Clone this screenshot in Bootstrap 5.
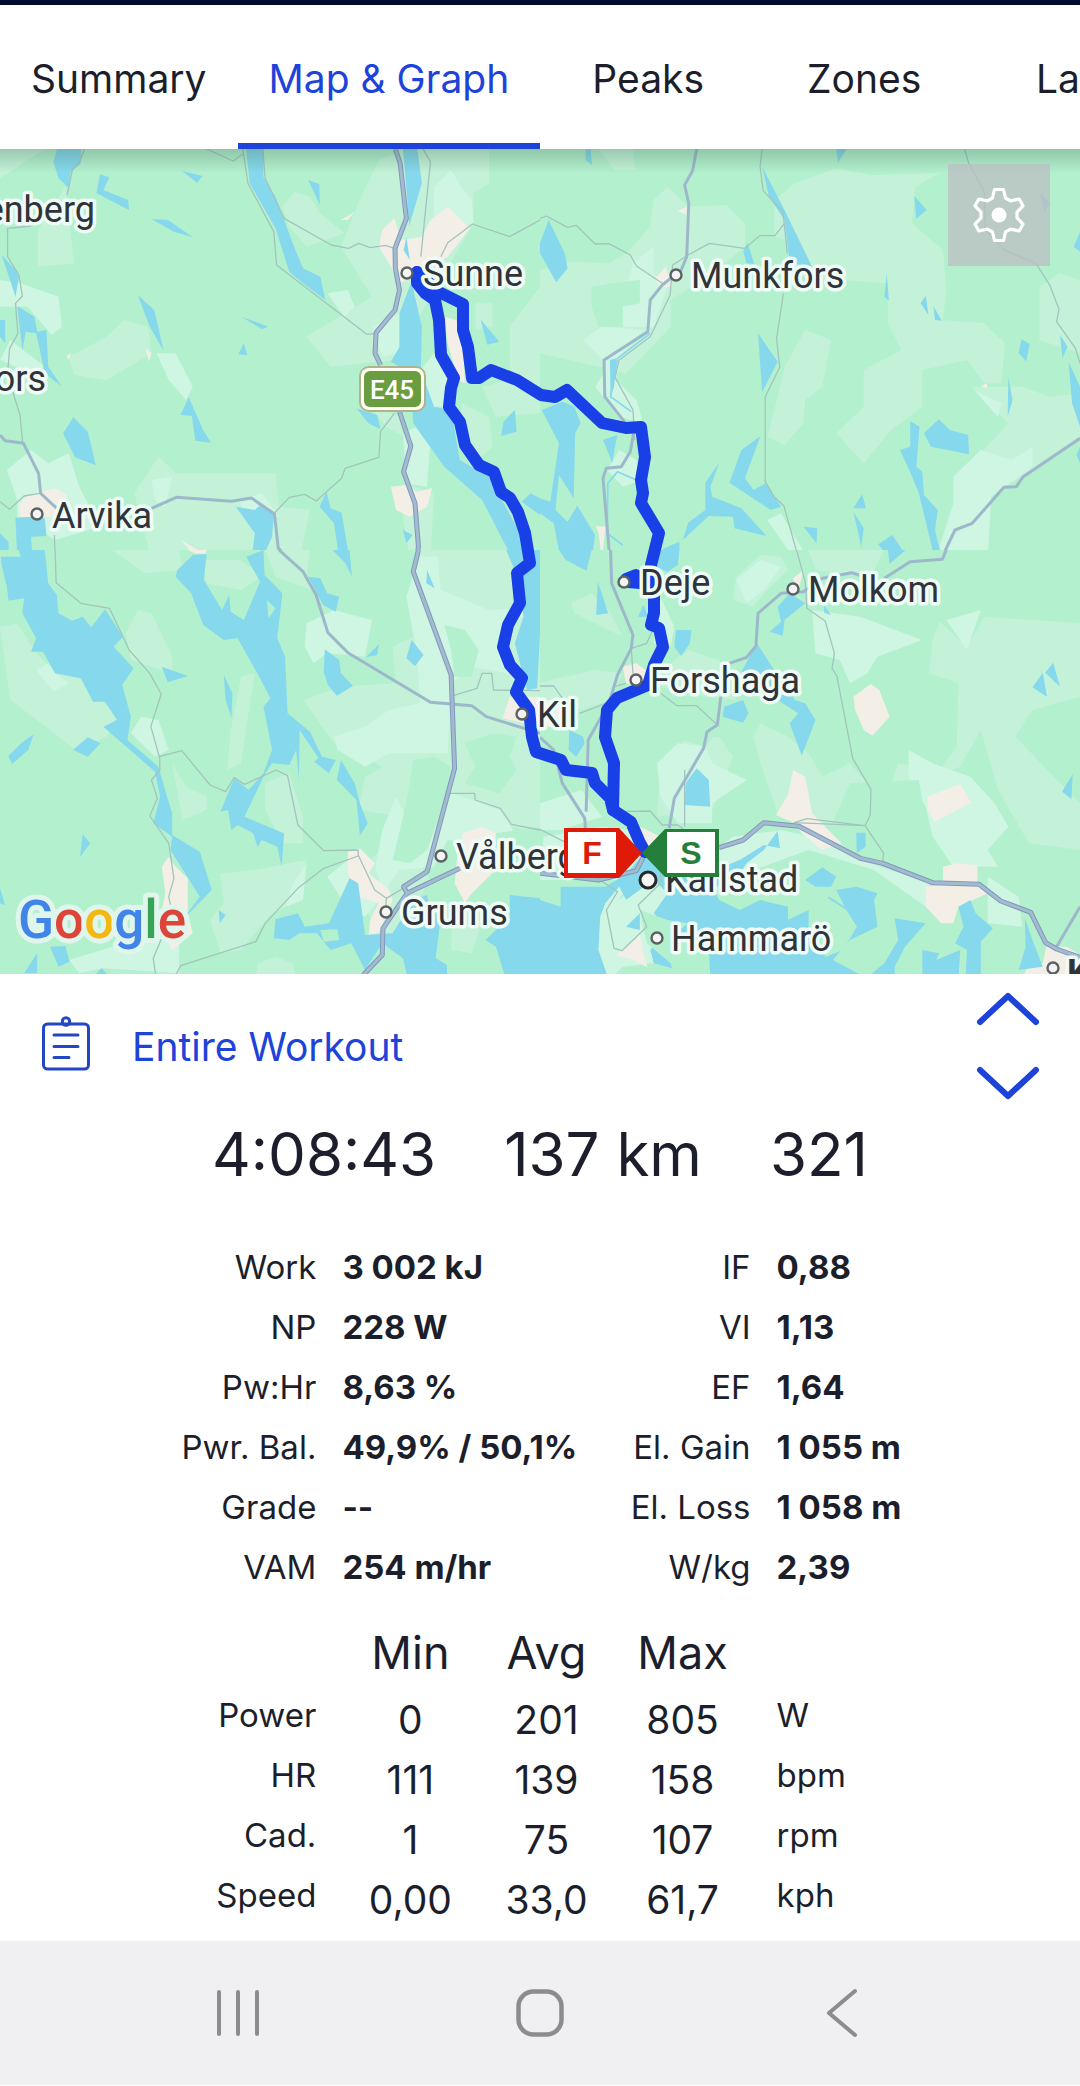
<!DOCTYPE html>
<html lang="en">
  <head>
    <meta charset="UTF-8" />
    <meta name="viewport" content="width=device-width, initial-scale=1.0" />
    <title>Workout - Map &amp; Graph</title>
    <!-- Bootstrap CSS -->
    <link
      href="https://cdn.jsdelivr.net/npm/bootstrap@5.3.0/dist/css/bootstrap.min.css"
      rel="stylesheet"
    />
    <style>
      body {
        font-family: Inter, "Liberation Sans", sans-serif;
        color: #1c1f2b;
        background-color: #fff;
      }
      .tab-strip {
        height: 149px;
        border-top: 5px solid #000c2e;
        overflow: hidden;
      }
      .tab-strip .nav-link {
        display: flex;
        align-items: center;
        justify-content: center;
        flex-shrink: 0;
        min-width: 216px;
        padding: 10px 31px 0;
        font-size: 39px;
        line-height: 48px;
        color: #1c1f2b;
        border-bottom: 6px solid transparent;
      }
      .tab-strip .nav-link.active {
        color: #1d43d8;
        border-bottom-color: #1d43d8;
      }
      .map-area svg {
        display: block;
      }
      .map-canvas {
        width: 100%;
        height: auto;
      }
      .map-settings {
        top: 15px;
        right: 30px;
        width: 102px;
        height: 102px;
        background-color: rgba(188, 190, 194, 0.75);
      }
      .land { fill: #b3f0ce; }
      .field { fill: #c3f2d9; }
      .meadow { fill: #cff5e3; }
      .town { fill: #f3efe6; }
      .water { fill: #86d8ec; }
      .lane, .road, .highway, .highway-core {
        fill: none;
        vector-effect: non-scaling-stroke;
        stroke-linejoin: round;
      }
      .lane { stroke: #a3c4bd; stroke-width: 1.3; }
      .road { stroke: #9db8ca; stroke-width: 3; }
      .highway { stroke: #8198bd; stroke-width: 5; }
      .highway-core { stroke: #a3bbcf; stroke-width: 3; }
      .route {
        fill: none;
        stroke: #193fe6;
        stroke-width: 12;
        stroke-linejoin: round;
        stroke-linecap: round;
      }
      .place {
        font: 36px Roboto, sans-serif;
        fill: #303338;
        stroke: #effbf6;
        stroke-width: 7;
        stroke-linejoin: round;
        paint-order: stroke;
      }
      .place-dot { fill: #f4f4f4; stroke: #5d6164; stroke-width: 2.4; }
      .workout-bar {
        height: 142px;
        padding: 0 40px;
      }
      .workout-link {
        gap: 40px;
        font-size: 39px;
        line-height: 48px;
        color: #1d43d8;
      }
      .workout-link span {
        padding-top: 4px;
      }
      .step-btn {
        line-height: 0;
      }
      .totals {
        gap: 68px;
        padding-bottom: 45px;
        font-size: 60px;
        line-height: 76px;
      }
      .metrics,
      .ranges {
        width: 100%;
        table-layout: fixed;
        font-size: 33px;
      }
      .metrics th,
      .metrics td,
      .ranges th,
      .ranges td {
        height: 60px;
        padding: 0;
        line-height: 40px;
        font-weight: 400;
        white-space: nowrap;
      }
      .metrics th {
        padding-right: 13px;
        text-align: right;
      }
      .metrics td {
        padding-left: 13px;
        font-weight: 700;
      }
      .ranges {
        margin-top: 16px;
      }
      .ranges thead th {
        height: 72px;
        padding-top: 8px;
        font-size: 45px;
        line-height: 56px;
      }
      .ranges tbody th {
        padding-right: 26px;
        text-align: right;
      }
      .ranges tbody td {
        padding-top: 9px;
        font-size: 39px;
        text-align: center;
      }
      .ranges tbody td.unit {
        padding-top: 0;
        padding-left: 26px;
        font-size: 33px;
        text-align: left;
      }
      .system-bar {
        height: 144px;
        margin-top: 16px;
        padding: 0 8%;
        background-color: #f0f0f2;
      }
      .system-bar .btn {
        flex: 1;
      }
    </style>
  </head>
  <body>
    <nav class="nav flex-nowrap tab-strip" aria-label="Workout sections">
      <a class="nav-link" href="#">Summary</a>
      <a class="nav-link active" href="#" aria-current="page">Map &amp; Graph</a>
      <a class="nav-link" href="#">Peaks</a>
      <a class="nav-link" href="#">Zones</a>
      <a class="nav-link" href="#">Laps</a>
    </nav>

    <main>
      <!-- Map -->
      <div class="map-area position-relative">
        <svg class="map-canvas" viewBox="0 149 1080 825" role="img" aria-label="Route map">
          <defs>
            <linearGradient id="topShade" x1="0" y1="0" x2="0" y2="1">
              <stop offset="0" stop-color="#3c6650" stop-opacity="0.3" />
              <stop offset="1" stop-color="#3c6650" stop-opacity="0" />
            </linearGradient>
          </defs>

          <!-- North-west tile -->
          <svg x="0" y="140" width="540" height="420" viewBox="0 0 1568 1260" preserveAspectRatio="none">
            <rect class="land" width="1568" height="1260" />
            <path class="field" d="M0 27H130L0 115zM110 270L190 140L215 370L110 380zM200 650L310 590L360 540L430 560L440 640L310 720L215 705zM820 200L855 155L900 170L930 220L1000 280L890 320L840 260zM1040 190L1100 60L1180 27H1420V130L1375 160V250L1200 560L1150 660L960 680L890 590L970 540L1080 470L990 320zM1480 560L1568 440V820L1440 830L1400 740L1480 720zM1380 490H1430V560L1380 570zM1340 790L1420 830L1430 920L1390 960L1340 900zM390 1060L460 950L510 1000L800 1000L810 1100L900 1110L870 1260H440zM1040 750L1090 800L1160 830L1200 1040L1260 1060L1250 1260H1190L1170 1130L1190 900L1120 860z" />
            <path class="meadow" d="M0 420L60 430L170 470L180 560L150 585L80 500H0zM1260 140L1310 90L1340 140L1370 180L1375 250L1260 300zM950 460L1010 450L1030 500L1000 530zM1080 560L1160 520L1160 640L1110 650zM455 640L510 640L560 740L540 780L490 720zM20 990L90 930L140 970L200 940L230 1040L290 1160L160 1200L50 1130V1080zM690 1080L760 1060L810 1130L740 1160zM440 1020L500 1010L480 1100L450 1080zM1170 880L1210 860L1250 900L1240 1040L1180 1030zM0 660L30 600L130 680L90 700zM1222 690L1260 640L1320 690L1300 800L1260 800z" />
            <path class="town" d="M1110 270L1145 235L1165 300L1225 290L1250 240L1300 200L1365 265L1300 350L1225 400L1160 430L1135 380L1100 320zM1290 530L1325 540L1345 620L1350 730L1330 720L1300 610zM55 1095L80 1065L160 1045L195 1065L160 1130H60zM1135 1040L1180 1035L1210 1055L1255 1045L1240 1100L1190 1130L1150 1110zM423 625L440 640L432 665zM525 1200L600 1245L560 1240zM990 240L1030 215L1010 240zM193 648L207 638L200 660z" />
            <path class="water" d="M165 27H235V70L205 95L200 145L170 115L155 65zM290 103L318 112L300 150L372 180L375 210L280 160zM528 92L588 108L572 128zM895 120L927 132L929 195zM441 238L488 240L560 292L505 275zM715 27H765V110L800 170L850 310L880 385L930 410L945 480L880 430L840 395L800 265L725 130zM1170 27H1212L1225 130L1188 258L1183 180zM1180 290L1190 360L1172 330zM1195 425L1225 560L1222 690L1260 800L1310 810L1335 960L1420 1010L1510 1180L1530 1260H1490L1400 1080L1290 980L1200 850L1190 700L1135 665L1160 620L1160 520zM5 345L45 390L55 410L45 470zM0 540H15V610L0 590zM50 498L100 530L108 575L135 570L140 680L180 740L130 700L105 580L75 575L65 630zM400 465L448 510L475 632L435 560zM700 530L780 560L760 567zM708 610L718 645L692 643zM548 772L590 870L613 908L567 902L557 828L524 825zM213 832L255 875L278 976L218 952L183 880zM1395 538L1450 605L1415 614zM1495 810L1500 875L1455 888L1462 845zM1035 805L1095 825L1105 868L1070 850zM45 1133L95 1130L130 1135L135 1188L90 1190L95 1260H50zM0 1180L25 1205V1260H0zM685 1100L740 1110L760 1090L795 1125L790 1190L760 1260H730L740 1180zM928 1100L948 1055L960 1105L992 1118L1015 1260H985L970 1150zM1170 1170L1198 1185L1180 1210zM1515 1085L1540 1060L1568 1075V1125zM540 1255L570 1235L605 1245V1260z" />
            <path class="lane" d="M245 27L230 70L210 90L195 165M22 265V350L55 405L65 468L45 490L52 580L28 625L22 700L40 765L58 825L66 910M22 265L90 258M600 27L677 63L708 40M705 27L720 130L795 275L803 375L1065 583L1095 580M763 27L770 115L825 235L962 315L1012 325L1042 310L1075 323L1120 316L1145 325M1228 27L1250 65L1222 350M1568 240L1480 290L1372 252L1300 308L1280 350M1145 820L1105 875L1100 952L1002 985L992 1015L918 1083L885 1063L840 1072L798 1118M0 1085L28 1108L70 1068L115 1060M158 1185L160 1260" />
            <path class="road" d="M0 885L15 902L68 910L112 1000L118 1060L165 1105M440 1105L512 1072L672 1084L730 1074L797 1122L808 1225L850 1260" />
            <path class="highway" d="M1148 27L1162 70L1180 235L1147 325L1148 385L1160 450L1147 510L1092 578L1089 640L1105 675M1160 815L1193 918L1172 995L1205 1090L1215 1220L1210 1260" />
            <path class="highway-core" d="M1148 27L1162 70L1180 235L1147 325L1148 385L1160 450L1147 510L1092 578L1089 640L1105 675M1160 815L1193 918L1172 995L1205 1090L1215 1220L1210 1260" />
          </svg>

          <!-- North-east tile -->
          <svg x="540" y="140" width="540" height="420" viewBox="0 0 1568 1260" preserveAspectRatio="none">
            <rect class="land" width="1568" height="1260" />
            <path class="field" d="M170 27H270L277 90L215 90zM0 390L80 365L200 370L250 340L320 260L330 180L370 140L430 200L540 195L595 250V320L500 400L380 480V560L250 700L0 640zM680 180L740 130L860 85L960 105L1160 100L1090 140L1080 250L1170 330L1180 450L1170 540L1290 550L1350 610L1340 730L1290 730L1240 660L1110 690L1110 800L1020 870L940 970L860 880L940 800V690L1050 630L1010 550V430L740 410L720 300L680 290zM770 570L845 600L820 740L770 780L765 850L710 915L660 890L690 770L710 680zM1450 440L1510 400L1568 420V640L1450 600zM1255 740L1400 740L1480 770L1568 760V900L1400 1010L1350 1040L1280 940L1360 850z" />
            <path class="meadow" d="M125 600L180 560L300 570L240 640L220 720L280 780L300 850L230 830L160 740L185 700V660zM195 990L230 930L280 960L300 1020L240 1040zM270 370L330 320V400L370 440L330 560L240 560V490zM1200 1010L1280 930L1370 960L1430 920V980L1310 1070L1300 1260H1170L1160 1220L1200 1090zM660 1140L700 1120L740 1190L780 1260H740zM620 1260L660 1240L680 1260zM1260 750L1340 790L1330 830z" />
            <path class="land" d="M150 440L210 430L290 420L290 490L240 500V560H170L150 500z" />
            <path class="town" d="M335 415L365 380L385 440L345 440zM400 212L427 200L425 225zM1280 738L1298 730V745zM162 1158L190 1160L180 1260L170 1180zM370 143L382 153z" />
            <path class="water" d="M133 27H147L151 75L132 60zM860 27H890L865 68zM25 240L72 340L80 385L47 427L0 340V310zM645 80L710 210L790 380L725 370L710 240L665 170zM590 335L603 310L622 372L600 370zM1087 168L1123 210L1092 236zM1452 160L1480 190L1465 215zM1568 275L1550 320L1568 335zM1007 400L1013 482L1000 470zM1120 467L1128 525L1105 490zM1142 498L1167 542L1147 540zM633 580L690 665L645 757zM1398 598L1422 612L1412 664L1390 640zM1510 585L1532 620L1517 655zM1535 665L1568 740V860L1545 790zM1360 710L1372 780L1358 830zM5 810L65 785L100 800L118 850L102 880L98 1075L55 1005L45 1110L80 1145L108 1097L160 1185L150 1260H60L40 1150L0 1120V1075L30 1085L55 910zM183 900L224 885L210 968zM203 660L222 655L215 740L205 770zM640 888L595 1015L620 1050L655 1030L700 1100L670 1110L550 1028L585 930zM520 968L495 1040L500 1070L585 1105L658 1188L565 1165L560 1130L490 1128L415 1200L430 1148L480 1110V1028zM1075 843L1102 860L1093 980L1110 995L1115 1065L1155 1110L1147 1170L1162 1235L1140 1230L1100 1060L1070 985L1045 930L1075 920zM1158 838L1190 870L1243 885L1246 943L1135 920L1115 880zM1568 920L1558 945L1568 970zM935 1063L947 1105L910 1105zM910 1115L940 1165L933 1220zM765 1160L805 1165L803 1210zM1023 1185L1062 1245L1045 1260H1020L982 1213zM360 1225L405 1205V1260H340z" />
            <path class="lane" d="M0 235L18 228L80 262L105 256L160 312L200 311L262 345L280 378L355 430M645 27L639 80L648 152L705 215L710 260L718 340M710 250L682 287H638L595 325L492 310L430 345L385 375L378 465L320 590L230 660L218 712L270 810L275 900M707 460L687 595L696 682L654 770V1025L680 1070L708 1097L752 1260M1233 27L1245 70L1290 155L1293 270L1350 332L1440 370L1480 435L1507 508L1500 545L1555 625L1568 670" />
            <path d="M320 580L225 655L205 770L265 815M280 1020L225 995L197 1030L195 1180L240 1215" fill="none" stroke="#86d8ec" stroke-width="5" />
            <path class="road" d="M455 27L443 92L420 135L432 190L426 350L410 390L355 435L320 480L313 575L186 660L188 770L272 880L262 935L236 980L192 985L183 1015L203 1260M1568 895L1403 1010L1383 1040L1347 1042L1255 1150L1205 1170L1165 1257L1080 1260" />
          </svg>

          <!-- South-west tile -->
          <svg x="0" y="550" width="540" height="430" viewBox="0 0 1568 1290" preserveAspectRatio="none">
            <rect class="land" width="1568" height="1290" />
            <path class="field" d="M325 0H520L530 60L420 70zM0 230L50 220L100 300L160 370L230 385L290 445L340 500L310 560L220 600L120 520L30 450zM400 180L440 190L500 320V370L380 330L365 250zM590 30L700 30L760 80L700 120L600 100zM700 380L740 370L720 500L700 640L660 660L670 540zM770 0H900L890 80L930 130L800 80zM880 450L990 410L1150 400L1140 290L1200 260L1180 140L1220 0H1568V850L1490 830L1300 730L1230 720L1170 800L1040 780L1060 680L1110 650L970 580zM770 700L840 670L880 800L880 880L820 880L770 780zM500 640L540 710L600 740V780L530 810zM640 970L740 960L890 930L860 1050L780 1100L700 1200L640 1210L610 1110L650 1060zM1010 990L1160 850L1250 990L1130 1180L1090 1130zM1310 1140L1400 1110L1370 1210L1310 1200zM750 1240L800 1220L850 1240L860 1290H740z" />
            <path class="meadow" d="M890 220L970 180L1080 210L1060 320L950 310L910 340L885 290zM1180 140L1220 20L1270 20L1280 120L1420 180L1568 170L1470 230L1450 290L1520 380L1370 350L1310 400L1300 610L1130 610L1060 650L980 600L970 560L1060 530L1130 480L1220 460L1210 300zM105 360L140 340L160 370L200 400L155 425zM410 500L460 510L490 600L450 620L380 550zM1290 720L1370 750L1450 780L1490 840L1460 900L1300 870L1260 950L1160 960L1130 1000L1120 1050L1090 950L1110 840L1150 740L1180 800zM950 980L1010 930L1070 1000L1100 1050L1060 1100L1000 1060zM850 1000L890 940L880 1050L830 1070zM200 1230L360 1180L430 1110L520 1180V1270L300 1255L230 1270z" />
            <path class="land" d="M1290 225L1350 240L1390 300L1370 380L1320 380L1310 300zM1350 580L1430 550L1500 560L1480 620L1500 660L1450 730L1350 700L1380 650zM1200 630L1260 620L1310 650L1290 760L1240 900L1190 940L1140 930L1180 760zM1440 850L1568 830V960L1500 990L1440 930z" />
            <path class="town" d="M545 0H600L597 12L565 10zM1480 440L1568 440V530L1460 505zM470 950L490 920L510 950L545 985V1090L560 1150L500 1200L460 1130L480 1030zM1010 905L1045 895L1088 940L1070 970L1130 1020L1140 1050L1100 1150L1070 1155L1075 1110L1100 1060L1040 1040L1010 970zM1345 850L1400 830L1440 850L1430 900L1440 960L1370 1030L1350 1060L1320 1000L1330 900zM705 1140L680 1185L700 1150z" />
            <path class="water" d="M0 0H130L140 100L165 135L170 190L210 212L240 200L265 232L305 178L357 260L330 290L388 355L355 405L380 500L370 570L460 650L485 740L500 790V855L580 905L615 1020L530 1110L580 1040L495 900L500 860L445 820L465 740L450 665L300 530L340 510L305 455L270 455L235 385L160 370L125 305L90 305L105 265L65 190L70 145L25 152L20 110L5 45zM515 60L560 15L600 12L592 90L645 180L665 135L670 185L708 210L755 95L715 20L765 0L768 75L820 130L805 265L828 320L835 490L900 545L935 620L975 630L955 670L912 635L925 625L870 540L868 690L860 600L840 645L790 640L770 670L710 800L825 850L818 950L805 890L760 870L748 890L735 850L690 825L672 840L662 780L640 785L680 685L722 720L765 670L790 600L765 470L785 445L750 375L690 265L650 270L590 225L555 130L510 80zM895 80L930 85L950 130L985 140L975 185L938 165zM965 0H1015L1022 80L1003 40zM1240 60L1262 115L1238 100zM1195 270L1230 315L1205 348L1180 325zM943 298L985 330L990 370L1025 408L978 437L952 405L940 365zM1100 283L1095 315L1062 322zM470 350L545 378L487 397zM650 375L675 430L672 503L655 450zM98 552L82 600L35 642L24 618L62 580zM255 562L292 580L255 620L212 600zM240 853L262 880L232 922zM978 690L990 630L1030 700L1045 760L1068 820L1045 857L1035 750zM1470 0H1568V250L1560 415L1530 420L1495 280L1520 200L1510 100zM0 1015L15 1065L0 1060zM145 1190L190 1188L202 1235L170 1250zM108 1210V1270H70zM270 1280L295 1255L320 1280zM635 1080L655 1095L638 1120zM800 1108L865 1090L885 1130L955 1120L1015 985L1040 1000L1060 1155L1140 1150L1200 1050L1240 1035L1250 1080L1280 1100L1265 1225L1298 1245V1290H1185L1170 1225L1110 1180L1060 1260L1020 1180L960 1200L920 1150L870 1150L840 1170L795 1165zM1480 1035L1568 1045V1290H1470L1440 1190L1410 1170L1480 1100z" />
            <path class="land" d="M0 0H55L60 20H0zM775 150L800 175L780 205zM930 1140L980 1138L985 1170L940 1175z" />
            <path class="lane" d="M160 0L163 98L235 160L318 175L375 300L435 370L468 432L438 530L464 625V660L440 690L457 745L435 798L490 880L505 985L490 1040L500 1090L445 1225L452 1275M462 620L528 602L610 705L655 725L680 683L710 703L802 660L835 677L865 825L940 902L1040 900V915L1088 1020L1122 1045L1170 1015M1040 918L940 955L865 1015L770 1120L743 1175L525 1247L510 1275M1315 437L1385 415L1400 370H1428L1433 420L1568 422M1300 730H1378L1380 750L1453 775L1485 823L1568 840M1122 1045L1120 1075" />
            <path class="road" d="M810 0L880 65L918 135L952 248L1010 308L1250 457L1370 467L1412 500L1568 550" />
            <path class="highway" d="M1215 0L1200 65L1310 375L1320 655L1240 965L1172 1010L1182 1030L1112 1135L1110 1215L1055 1275M1182 1030L1335 955" />
            <path class="highway-core" d="M1215 0L1200 65L1310 375L1320 655L1240 965L1172 1010L1182 1030L1112 1135L1110 1215L1055 1275M1182 1030L1335 955" />
          </svg>

          <!-- South-east tile -->
          <svg x="540" y="550" width="540" height="430" viewBox="0 0 1568 1290" preserveAspectRatio="none">
            <rect class="land" width="1568" height="1290" />
            <path class="field" d="M560 150L570 80L640 15L700 20L720 60L650 130L620 170zM90 160L150 130L200 180L240 260L100 190zM30 390L160 360L240 370L200 450L120 480L0 440V400zM380 340L430 300L520 330L570 450L480 440L350 410zM620 560L640 520L720 560L780 610L820 680L900 640L1000 760L1040 640L1160 660L1210 590L1215 400L1130 370L1140 270L1160 215L1240 290L1290 200L1568 220V440L1430 480L1380 560L1510 700L1568 760V900L1420 880L1330 720L1280 540L1220 650L1090 700L1000 830L740 810L690 790L640 640zM780 0H1000L960 80L800 60zM350 640L420 570L520 560L560 620L500 780L340 800z" />
            <path class="meadow" d="M570 90L640 30L700 50L650 120L600 160zM790 180L930 200L1110 270L980 320L950 370L900 400L870 330L800 310zM340 640L400 580L480 590L500 640L600 690L500 760L500 820L400 820L350 740zM0 760L120 720L180 800L60 840H0zM10 860L180 830L260 840L300 900L300 990H0zM1070 600L1140 640L1250 680L1320 760L1360 830L1300 900L1330 950L1200 950L1140 860L1120 770L1070 680zM1300 980L1390 1040L1400 1130L1300 1120zM350 140L390 230L380 290L330 280zM1180 210L1280 180L1240 300zM560 860L700 840L870 880L960 940L1130 1000L1120 1070L970 960L780 900L620 960L520 960V890z" />
            <path class="land" d="M900 700L1100 690L1130 880L1100 960L960 870L840 840zM420 480L520 540L480 590L380 560L240 600L230 500z" />
            <path class="town" d="M910 440L960 402L985 420L1015 500L965 557L940 540L915 480zM735 660L770 680L790 790L875 880L820 900L760 850L740 820L685 795L720 735zM1125 740L1220 702L1252 758L1145 815L1125 780zM1170 950L1210 940L1270 945L1270 1000L1300 1030L1215 1070L1200 1120L1165 1120L1120 1070V1010L1170 1000zM240 350L280 340L320 370L300 410L250 400zM735 85L765 60L750 125zM0 450H80L100 530H0zM290 830L370 870L310 900zM260 960L350 960L350 1000L280 1040L230 1010zM1470 1190L1530 1190L1568 1215V1275H1405L1415 1250L1460 1240z" />
            <path class="water" d="M55 0H150L135 62L75 30zM340 0H405L400 45L370 65L335 50zM1010 0H1062L1015 42zM168 95L198 190L163 195zM300 165L315 200H285zM395 240H440L435 280L410 318L390 290zM725 130L770 160L710 210L705 257L667 245L700 215L690 170zM825 165L845 195L825 188zM630 280L680 360L740 450L770 460L800 510L760 617L725 520L750 490L690 450L585 365zM535 470L590 450L605 490L590 518L530 500zM85 540L125 560L130 580L105 620L83 600zM1430 412L1460 368L1472 440zM1490 338L1510 410L1467 368zM1547 672L1543 747L1516 725zM455 655L490 690L494 770L420 765L423 700zM918 848H945L946 890L920 908zM690 843L697 895L650 885L580 930L520 955L480 980H400L360 940L310 900L260 960L230 985L190 1010L60 1010V1070L0 1050V1290H200L170 1200L175 1100L190 1060L230 1010L250 1050L330 990L370 1030L330 1090L370 1130L320 1200L330 1240L400 1260L500 1290H960L850 1230L900 1170L980 1130L970 1050L980 1030L920 1010L860 1020L885 1070L840 1040L780 1080L720 1110V1070L640 1050L580 1080L520 1050L500 1010L560 1000L600 940L650 900zM820 952L860 980L845 1010L800 1010L770 990zM1030 1105L1120 1120L1060 1190L1030 1250V1290H940L1000 1240L1040 1170zM1215 1070L1250 1050L1265 1090L1315 1135L1280 1175V1290H1235L1240 1200L1205 1180L1230 1130zM1110 1200L1160 1210L1150 1230L1220 1200L1215 1290H1110zM1408 1105L1430 1170L1460 1250L1390 1260L1410 1190z" />
            <path class="meadow" d="M190 1060L230 1010L250 1050L330 990L370 1030L330 1090L370 1130L320 1200L330 1240L240 1250L200 1290L170 1200L175 1100z" />
            <path class="land" d="M290 1080L370 1110L430 1120L380 1160L490 1195L495 1290H390L380 1240L310 1180L300 1130zM780 1070L830 1040L890 1080L920 1130L880 1200L830 1220L780 1160z" />
            <path class="water" d="M250 1130L290 1090V1140zM230 1050L275 1000L260 1005z" />
            <path class="town" d="M220 1215L290 1150L300 1210L312 1252L270 1230z" />
            <path class="lane" d="M745 0L770 95L775 175L828 213L855 310L848 355L862 378L908 625L961 718L959 795L944 827L738 818L775 806L944 827L998 910L995 935M325 245L310 280L265 295L270 370M215 410L250 400M115 490L205 455M0 408H40L65 445M350 430L398 467H455L515 525M420 660V830M230 785L320 783L355 825H400L420 840M0 838L70 875M130 960L225 1025L193 1080L215 1195L238 1202L310 1130L285 1065L350 1000L350 970" />
            <path class="road" d="M205 0L208 100L270 255L265 295L225 375L200 460L140 570L134 785M0 562L40 600L65 700L130 805L132 840M1180 0L1168 28L1075 35L1000 85M935 78L905 68L820 85L765 125L700 130L633 190L627 288L600 322L550 340M525 440L515 525L485 545L475 595L390 745L375 835M1568 1070L1500 1190" />
            <path class="highway" d="M0 970L170 990L280 962L310 900M520 893L590 870L650 818L752 829L930 925L995 940L1140 998L1275 1003L1338 1053L1425 1087L1468 1178L1500 1197L1568 1222" />
            <path class="highway-core" d="M0 970L170 990L280 962L310 900M520 893L590 870L650 818L752 829L930 925L995 940L1140 998L1275 1003L1338 1053L1425 1087L1468 1178L1500 1197L1568 1222" />
          </svg>

          <rect x="0" y="149" width="1080" height="24" fill="url(#topShade)" />

          <!-- Ridden route -->
          <path class="route" d="M417 272L417 283L425 293L435 300L439 320L441 355L454 378L451 388L449 407L460 422L465 445L479 465L494 472L501 492L510 498L518 512L525 533L530 563L517 573L520 603L508 625L503 647L510 665L522 678L516 692L529 710L532 737L536 752L561 760L566 770L592 773L595 783L610 798L613 810L631 822L640 843L645 852" />
          <path class="route" d="M417 272L439 292L463 304L463 330L468 347L472 378L479 378L491 370L517 380L541 395L555 397L567 390L602 423L626 428L641 427L645 457L641 480L643 493L641 503L659 533L651 565L654 597L654 613L651 625L659 628L663 647L654 665L648 685L617 698L607 710L605 737L614 763L613 810" />
          <path class="route" d="M626 579L636 575L640 583L628 582" />

          <!-- Road shield -->
          <rect x="359" y="366" width="67" height="46" rx="10" fill="#b0b48a" />
          <rect x="361" y="368" width="63" height="42" rx="8" fill="#fffef2" />
          <rect x="364" y="371" width="57" height="36" rx="6" fill="#699d40" />
          <text x="392" y="399" text-anchor="middle" font-family="Roboto, sans-serif" font-size="26" font-weight="500" fill="#fff">E45</text>

          <!-- Places -->
          <g class="place-dot">
            <circle cx="407" cy="273" r="5.5" />
            <circle cx="676" cy="275" r="5.5" />
            <circle cx="37" cy="514" r="5.5" />
            <circle cx="624" cy="582" r="5.5" />
            <circle cx="793" cy="589" r="5.5" />
            <circle cx="636" cy="680" r="5.5" />
            <circle cx="522" cy="714" r="5.5" />
            <circle cx="441" cy="856" r="5.5" />
            <circle cx="386" cy="912" r="5.5" />
            <circle cx="657" cy="938" r="5.5" />
            <circle cx="1053" cy="968" r="5.5" />
            <circle cx="648" cy="880" r="8" stroke="#26292b" stroke-width="3" />
          </g>
          <g class="place">
            <text x="95" y="222" text-anchor="end">enberg</text>
            <text x="46" y="391" text-anchor="end">ors</text>
            <text x="423" y="286">Sunne</text>
            <text x="691" y="288">Munkfors</text>
            <text x="52" y="528">Arvika</text>
            <text x="640" y="595">Deje</text>
            <text x="808" y="602">Molkom</text>
            <text x="650" y="693">Forshaga</text>
            <text x="537" y="727">Kil</text>
            <text x="456" y="869">Vålberg</text>
            <text x="401" y="925">Grums</text>
            <text x="665" y="892">Karlstad</text>
            <text x="671" y="951">Hammarö</text>
            <text x="1067" y="985" font-weight="700">K</text>
          </g>

          <!-- Start and finish flags -->
          <path d="M564 828H619L642 853L619 878H564z" fill="#e01a08" />
          <rect x="568" y="832" width="48" height="41" fill="#fff" />
          <text x="592" y="864" text-anchor="middle" font-family="Liberation Sans, sans-serif" font-size="32" font-weight="700" fill="#e01a08">F</text>
          <path d="M719 829H665L642 853L665 877H719z" fill="#257f3a" />
          <rect x="667" y="832" width="48" height="41" fill="#fff" />
          <text x="691" y="864" text-anchor="middle" font-family="Liberation Sans, sans-serif" font-size="32" font-weight="700" fill="#257f3a">S</text>

          <!-- Map provider -->
          <text x="18" y="938" font-family="Roboto, sans-serif" font-size="53" font-weight="500" stroke="#e0f6ec" stroke-width="10" stroke-linejoin="round" paint-order="stroke"><tspan fill="#4285e8">G</tspan><tspan fill="#dd4539">o</tspan><tspan fill="#f3b912">o</tspan><tspan fill="#4285e8">g</tspan><tspan fill="#37a354">l</tspan><tspan fill="#dd4539">e</tspan></text>
        </svg>

        <button type="button" class="btn rounded-0 border-0 p-0 position-absolute d-flex align-items-center justify-content-center map-settings" aria-label="Map settings">
          <svg width="60" height="60" viewBox="-30 -30 60 60" fill="none" stroke="#fff" stroke-width="3.2" stroke-linejoin="round">
            <path d="M-6.5 -17L-4.5 -25.500H4.5L6.5 -17L11.5 -14.1L20.2 -16L24 -9.2L18 -2.8V2.8L24 9.2L20.2 16L11.5 14.1L6.5 17L4.5 25.500H-4.5L-6.5 17L-11.5 14.1L-20.2 16L-24 9.2L-18 2.8V-2.8L-24 -9.2L-20.2 -16L-11.5 -14.1z" />
            <circle r="7.5" fill="#fff" stroke="none" />
          </svg>
        </button>
      </div>

      <!-- Selected range -->
      <div class="d-flex align-items-center justify-content-between workout-bar">
        <a href="#" class="d-flex align-items-center text-decoration-none workout-link">
          <svg width="52" height="58" viewBox="0 0 52 58" fill="none" stroke="#2347c4" stroke-width="3" stroke-linecap="round">
            <rect x="3.5" y="8" width="45" height="45" rx="4" />
            <circle cx="26" cy="5.5" r="3.700" />
            <path d="M14 19H38M14 30.500H38M14 41.500H29" />
          </svg>
          <span>Entire Workout</span>
        </a>
        <div class="d-flex flex-column step-group">
          <button type="button" class="btn p-0 border-0 step-btn" aria-label="Previous">
            <svg width="64" height="56" viewBox="0 0 64 56" fill="none" stroke="#1d43d8" stroke-width="6" stroke-linecap="round" stroke-linejoin="round"><path d="M4 33L32 7L60 33" /></svg>
          </button>
          <button type="button" class="btn p-0 border-0 step-btn" aria-label="Next">
            <svg width="64" height="56" viewBox="0 0 64 56" fill="none" stroke="#1d43d8" stroke-width="6" stroke-linecap="round" stroke-linejoin="round"><path d="M4 25L32 51L60 25" /></svg>
          </button>
        </div>
      </div>

      <div class="d-flex justify-content-center totals">
        <span>4:08:43</span>
        <span>137 km</span>
        <span>321</span>
      </div>

      <!-- Workout metrics -->
      <table class="metrics">
        <colgroup>
          <col style="width: 30.5%" />
          <col style="width: 25%" />
          <col style="width: 15.2%" />
          <col style="width: 29.3%" />
        </colgroup>
        <tbody>
          <tr><th scope="row">Work</th><td>3 002 kJ</td><th scope="row">IF</th><td>0,88</td></tr>
          <tr><th scope="row">NP</th><td>228 W</td><th scope="row">VI</th><td>1,13</td></tr>
          <tr><th scope="row">Pw:Hr</th><td>8,63 %</td><th scope="row">EF</th><td>1,64</td></tr>
          <tr><th scope="row">Pwr. Bal.</th><td>49,9% / 50,1%</td><th scope="row">El. Gain</th><td>1 055 m</td></tr>
          <tr><th scope="row">Grade</th><td>--</td><th scope="row">El. Loss</th><td>1 058 m</td></tr>
          <tr><th scope="row">VAM</th><td>254 m/hr</td><th scope="row">W/kg</th><td>2,39</td></tr>
        </tbody>
      </table>

      <!-- Min / avg / max -->
      <table class="ranges">
        <colgroup>
          <col style="width: 31.7%" />
          <col style="width: 12.6%" />
          <col style="width: 12.6%" />
          <col style="width: 12.6%" />
          <col style="width: 30.5%" />
        </colgroup>
        <thead>
          <tr class="text-center"><td></td><th scope="col">Min</th><th scope="col">Avg</th><th scope="col">Max</th><td></td></tr>
        </thead>
        <tbody>
          <tr><th scope="row">Power</th><td>0</td><td>201</td><td>805</td><td class="unit">W</td></tr>
          <tr><th scope="row">HR</th><td>111</td><td>139</td><td>158</td><td class="unit">bpm</td></tr>
          <tr><th scope="row">Cad.</th><td>1</td><td>75</td><td>107</td><td class="unit">rpm</td></tr>
          <tr><th scope="row">Speed</th><td>0,00</td><td>33,0</td><td>61,7</td><td class="unit">kph</td></tr>
        </tbody>
      </table>
    </main>

    <!-- System navigation -->
    <footer class="d-flex align-items-center system-bar">
      <button type="button" class="btn border-0" aria-label="Recent apps">
        <svg width="52" height="52" viewBox="0 0 52 52" stroke="#8c8c8c" stroke-width="4" stroke-linecap="round"><path d="M7 5V47M26 5V47M45 5V47" /></svg>
      </button>
      <button type="button" class="btn border-0" aria-label="Home">
        <svg width="52" height="52" viewBox="0 0 52 52" fill="none" stroke="#8c8c8c" stroke-width="4.500"><rect x="4.500" y="4.500" width="43" height="43" rx="15" /></svg>
      </button>
      <button type="button" class="btn border-0" aria-label="Back">
        <svg width="52" height="52" viewBox="0 0 52 52" fill="none" stroke="#8c8c8c" stroke-width="4" stroke-linecap="round" stroke-linejoin="round"><path d="M39 4L13 26L39 48" /></svg>
      </button>
    </footer>

    <!-- Bootstrap JS -->
    <script src="https://cdn.jsdelivr.net/npm/bootstrap@5.3.0/dist/js/bootstrap.bundle.min.js"></script>
  </body>
</html>
